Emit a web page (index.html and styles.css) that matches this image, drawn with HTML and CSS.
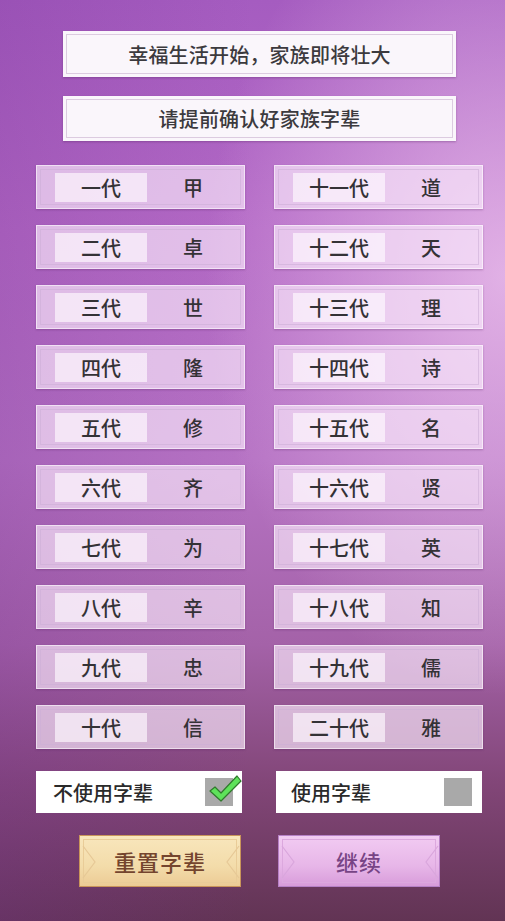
FILE: index.html
```html
<!DOCTYPE html>
<html lang="zh">
<head>
<meta charset="utf-8">
<title>家族字辈</title>
<link rel="stylesheet" href="styles.css">
</head>
<body>
<div class="page">
  <div class="banner banner-1"><span>幸福生活开始，家族即将壮大</span></div>
  <div class="banner banner-2"><span>请提前确认好家族字辈</span></div>

  <div class="grid">
    <div class="cell"><span class="label">一代</span><span class="value">甲</span></div>
    <div class="cell right"><span class="label">十一代</span><span class="value">道</span></div>
    <div class="cell"><span class="label">二代</span><span class="value">卓</span></div>
    <div class="cell right"><span class="label">十二代</span><span class="value">天</span></div>
    <div class="cell"><span class="label">三代</span><span class="value">世</span></div>
    <div class="cell right"><span class="label">十三代</span><span class="value">理</span></div>
    <div class="cell"><span class="label">四代</span><span class="value">隆</span></div>
    <div class="cell right"><span class="label">十四代</span><span class="value">诗</span></div>
    <div class="cell"><span class="label">五代</span><span class="value">修</span></div>
    <div class="cell right"><span class="label">十五代</span><span class="value">名</span></div>
    <div class="cell"><span class="label">六代</span><span class="value">齐</span></div>
    <div class="cell right"><span class="label">十六代</span><span class="value">贤</span></div>
    <div class="cell"><span class="label">七代</span><span class="value">为</span></div>
    <div class="cell right"><span class="label">十七代</span><span class="value">英</span></div>
    <div class="cell"><span class="label">八代</span><span class="value">辛</span></div>
    <div class="cell right"><span class="label">十八代</span><span class="value">知</span></div>
    <div class="cell"><span class="label">九代</span><span class="value">忠</span></div>
    <div class="cell right"><span class="label">十九代</span><span class="value">儒</span></div>
    <div class="cell"><span class="label">十代</span><span class="value">信</span></div>
    <div class="cell right"><span class="label">二十代</span><span class="value">雅</span></div>
  </div>

  <div class="options">
    <div class="option">
      <span class="option-text">不使用字辈</span>
      <span class="box">
        <svg class="check" width="36" height="32" viewBox="0 0 36 32">
          <path d="M3 18 L8 14 L14 20 L30 3 L34 8 L14 28 Z" fill="#5ee25a" stroke="#2f7a2c" stroke-width="1.2" stroke-linejoin="round"/>
        </svg>
      </span>
    </div>
    <div class="option option-right">
      <span class="option-text">使用字辈</span>
      <span class="box"></span>
    </div>
  </div>

  <div class="buttons">
    <div class="btn btn-reset">
      <svg class="deco" width="162" height="52" viewBox="0 0 162 52">
        <polyline points="3,10 15,26 3,42" fill="none" stroke="#e6c896" stroke-width="1.2"/>
        <polyline points="159,10 147,26 159,42" fill="none" stroke="#e6c896" stroke-width="1.2"/>
      </svg>
      <span>重置字辈</span>
    </div>
    <div class="btn btn-go">
      <svg class="deco" width="162" height="52" viewBox="0 0 162 52">
        <polyline points="3,10 15,26 3,42" fill="none" stroke="#d9a6dc" stroke-width="1.2"/>
        <polyline points="159,10 147,26 159,42" fill="none" stroke="#d9a6dc" stroke-width="1.2"/>
      </svg>
      <span>继续</span>
    </div>
  </div>
</div>
</body>
</html>
```

FILE: styles.css
```css
* { box-sizing: border-box; }

html, body {
  margin: 0;
  padding: 0;
}

body {
  width: 505px;
  height: 921px;
  overflow: hidden;
  font-family: "Noto Sans CJK SC", "Noto Sans", sans-serif;
  background:
    radial-gradient(ellipse 300px 420px at 100% 30%, rgba(240, 200, 240, 0.75), rgba(240, 200, 240, 0) 100%),
    linear-gradient(90deg, rgba(120, 50, 150, 0.25) 0%, rgba(120, 50, 150, 0) 50%),
    linear-gradient(180deg, #a55cc0 0%, #b46ac6 25%, #b673c4 50%, #a462a8 70%, #824678 85%, #623454 100%);
}

.page {
  display: flex;
  flex-direction: column;
  padding-top: 31px;
}

.banner {
  position: relative;
  margin-left: 63px;
  width: 393px;
  background: #faf6fb;
  box-shadow: 0 1px 2px rgba(80, 30, 90, 0.35);
  display: flex;
  align-items: center;
  justify-content: center;
  color: #3c3a3e;
  font-size: 20px;
  font-weight: 500;
  letter-spacing: 0.2px;
}

.banner::before {
  content: "";
  position: absolute;
  inset: 3px;
  border: 1px solid #dccbe0;
}

.banner span { position: relative; }

.banner-1 { height: 46px; }
.banner-2 { height: 45px; margin-top: 19px; }

.grid {
  margin-top: 24px;
  margin-left: 36px;
  width: 447px;
  display: grid;
  grid-template-columns: 209px 209px;
  column-gap: 29px;
  row-gap: 16px;
}

.cell {
  position: relative;
  height: 44px;
  background: rgba(250, 236, 252, 0.66);
  border: 1px solid rgba(255, 255, 255, 0.55);
  box-shadow: 0 1px 2px rgba(80, 30, 90, 0.3);
  display: flex;
  align-items: center;
  padding-left: 18px;
  color: #343236;
  font-size: 20px;
  font-weight: 500;
}

.cell::before {
  content: "";
  position: absolute;
  inset: 3px;
  border: 1px solid rgba(205, 175, 215, 0.6);
}

.label {
  position: relative;
  width: 92px;
  height: 29px;
  background: rgba(255, 250, 255, 0.65);
  display: flex;
  align-items: center;
  justify-content: center;
}

.value {
  position: relative;
  width: 92px;
  text-align: center;
}

.options {
  margin-top: 22px;
  margin-left: 36px;
  display: flex;
  gap: 34px;
}

.option {
  width: 206px;
  height: 42px;
  background: #ffffff;
  display: flex;
  align-items: center;
  justify-content: space-between;
  padding-left: 17px;
  padding-right: 9px;
  color: #2a2a2a;
  font-size: 20px;
  font-weight: 500;
}

.option-right { padding-left: 15px; padding-right: 10px; }

.box {
  position: relative;
  width: 28px;
  height: 28px;
  background: #a9a9a9;
}

.check {
  position: absolute;
  left: 2px;
  top: -5px;
}

.buttons {
  margin-top: 22px;
  margin-left: 79px;
  display: flex;
  gap: 37px;
}

.btn {
  position: relative;
  width: 162px;
  height: 52px;
  display: flex;
  align-items: center;
  justify-content: center;
  font-size: 22px;
  font-weight: 500;
  letter-spacing: 1px;
}

.btn::before {
  content: "";
  position: absolute;
  inset: 3px;
  border: 1px solid rgba(255, 255, 255, 0.35);
}

.btn .deco {
  position: absolute;
  left: 0;
  top: 0;
}

.btn span { position: relative; }

.btn-reset {
  background: linear-gradient(180deg, #f8e6bc 0%, #f3dcaa 60%, #eccb95 100%);
  border: 1px solid #c9955a;
  color: #74452e;
}

.btn-reset::before { border-color: #e9cc98; }

.btn-go {
  background: linear-gradient(180deg, #f2cbf2 0%, #e7b6e8 60%, #d89cda 100%);
  border: 1px solid #b680c6;
  color: #774485;
}

.btn-go::before { border-color: #dca8de; }
```
